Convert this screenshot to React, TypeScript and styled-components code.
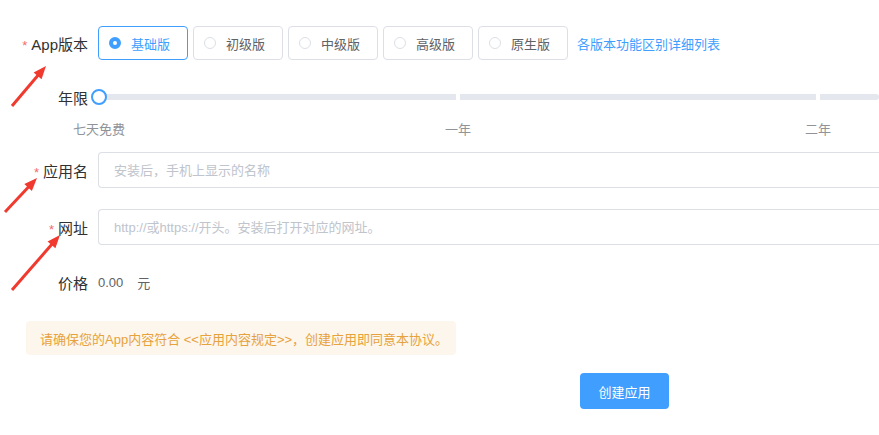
import React from 'react';
import styled, { createGlobalStyle } from 'styled-components';

const Global = createGlobalStyle`
  body { margin: 0; background: #fff; font-family: "Liberation Sans", "Noto Sans CJK SC", sans-serif; font-size: 14px; color: #606266; overflow: hidden; }
`;

const Page = styled.div`
  position: relative;
  width: 879px;
  height: 435px;
  padding-top: 26px;
  box-sizing: border-box;
`;

const Row = styled.div<{ $h: number; $mt?: number }>`
  display: flex;
  align-items: center;
  height: ${(p) => p.$h}px;
  margin-top: ${(p) => p.$mt ?? 0}px;
`;

const Label = styled.div<{ $required?: boolean }>`
  width: 88px;
  flex-shrink: 0;
  text-align: right;
  padding-right: 10px;
  font-size: 15px;
  color: #303133;
  box-sizing: content-box;
  &::before {
    content: ${(p) => (p.$required ? "'*'" : "''")};
    color: #f56c6c;
    margin-right: 4px;
    font-size: 13px;
  }
`;

const RadioGroup = styled.div`
  display: flex;
  gap: 5px;
  align-items: center;
`;

const RadioBox = styled.div<{ $active?: boolean }>`
  width: 90px;
  height: 34px;
  box-sizing: border-box;
  border: 1px solid ${(p) => (p.$active ? '#409eff' : '#dcdfe6')};
  border-radius: 4px;
  display: flex;
  align-items: center;
  padding-left: 10px;
  gap: 10px;
  color: ${(p) => (p.$active ? '#409eff' : '#606266')};
  font-size: 13px;
`;

const Dot = styled.span<{ $active?: boolean }>`
  width: 12px;
  height: 12px;
  border-radius: 50%;
  box-sizing: border-box;
  border: ${(p) => (p.$active ? '4px solid #409eff' : '1px solid #dcdfe6')};
  background: #fff;
`;

const Link = styled.a`
  color: #409eff;
  font-size: 13px;
  margin-left: 9px;
`;

const SliderWrap = styled.div`
  position: relative;
  flex: 1;
  height: 6px;
  background: #e4e7ed;
  border-radius: 3px;
`;

const Stop = styled.span<{ $x: number }>`
  position: absolute;
  top: 0;
  left: ${(p) => p.$x}px;
  width: 4px;
  height: 6px;
  background: #fff;
`;

const Thumb = styled.span`
  position: absolute;
  left: -7px;
  top: -5px;
  width: 16px;
  height: 16px;
  box-sizing: border-box;
  border: 2px solid #409eff;
  border-radius: 50%;
  background: #fff;
`;

const Marks = styled.div`
  position: relative;
  height: 20px;
  margin-top: 12px;
  font-size: 13px;
  color: #909399;
`;

const Mark = styled.span<{ $x: number }>`
  position: absolute;
  left: ${(p) => p.$x}px;
  top: 0;
`;

const Input = styled.input`
  flex: 1;
  height: 36px;
  box-sizing: border-box;
  border: 1px solid #dcdfe6;
  border-right: none;
  border-radius: 4px 0 0 4px;
  padding: 0 15px;
  font-size: 13px;
  font-family: inherit;
  outline: none;
  &::placeholder { color: #c0c4cc; }
`;

const Price = styled.span`
  font-size: 13px;
  color: #606266;
  margin-right: 14px;
`;

const Notice = styled.div`
  margin: 21px 0 0 26px;
  width: 430px;
  height: 34px;
  box-sizing: border-box;
  background: #fdf6ec;
  color: #e6a23c;
  font-size: 13px;
  display: flex;
  align-items: center;
  padding-left: 14px;
  border-radius: 4px;
`;

const Submit = styled.button`
  display: block;
  margin: 18px 0 0 580px;
  width: 89px;
  height: 36px;
  border: none;
  border-radius: 4px;
  background: #409eff;
  color: #fff;
  font-size: 13px;
  font-family: inherit;
`;

const Arrow = styled.svg`
  position: absolute;
  left: 0;
  top: 0;
  pointer-events: none;
`;

const arrows = [
  [12, 106, 46, 66],
  [5, 212, 37, 178],
  [12, 290, 60, 235],
];

const versions = ['基础版', '初级版', '中级版', '高级版', '原生版'];

export default function App() {
  return (
    <Page>
      <Global />
      <Row $h={34}>
        <Label $required>App版本</Label>
        <RadioGroup>
          {versions.map((v, i) => (
            <RadioBox key={v} $active={i === 0}>
              <Dot $active={i === 0} />
              {v}
            </RadioBox>
          ))}
        </RadioGroup>
        <Link>各版本功能区别详细列表</Link>
      </Row>
      <Row $h={20} $mt={27}>
        <Label>年限</Label>
        <SliderWrap>
          <Stop $x={358} />
          <Stop $x={718} />
          <Thumb />
        </SliderWrap>
      </Row>
      <Marks>
        <Mark $x={73}>七天免费</Mark>
        <Mark $x={445}>一年</Mark>
        <Mark $x={805}>二年</Mark>
      </Marks>
      <Row $h={36} $mt={13}>
        <Label $required>应用名</Label>
        <Input placeholder="安装后，手机上显示的名称" />
      </Row>
      <Row $h={36} $mt={21}>
        <Label $required>网址</Label>
        <Input placeholder="http://或https://开头。安装后打开对应的网址。" />
      </Row>
      <Row $h={36} $mt={19}>
        <Label>价格</Label>
        <Price>0.00</Price>
        <Price>元</Price>
      </Row>
      <Notice>请确保您的App内容符合 &lt;&lt;应用内容规定&gt;&gt;，创建应用即同意本协议。</Notice>
      <Submit>创建应用</Submit>
      <Arrow width={879} height={435}>
        {arrows.map(([x1, y1, x2, y2], i) => {
          const a = Math.atan2(y2 - y1, x2 - x1);
          const l = 14;
          const w = 0.38;
          const p1 = [x2 - l * Math.cos(a - w), y2 - l * Math.sin(a - w)];
          const p2 = [x2 - l * Math.cos(a + w), y2 - l * Math.sin(a + w)];
          return (
            <g key={i}>
              <line x1={x1} y1={y1} x2={x2 - 8 * Math.cos(a)} y2={y2 - 8 * Math.sin(a)} stroke="#f03a2f" strokeWidth={3} />
              <polygon points={`${x2},${y2} ${p1.join(',')} ${p2.join(',')}`} fill="#f03a2f" />
            </g>
          );
        })}
      </Arrow>
    </Page>
  );
}
